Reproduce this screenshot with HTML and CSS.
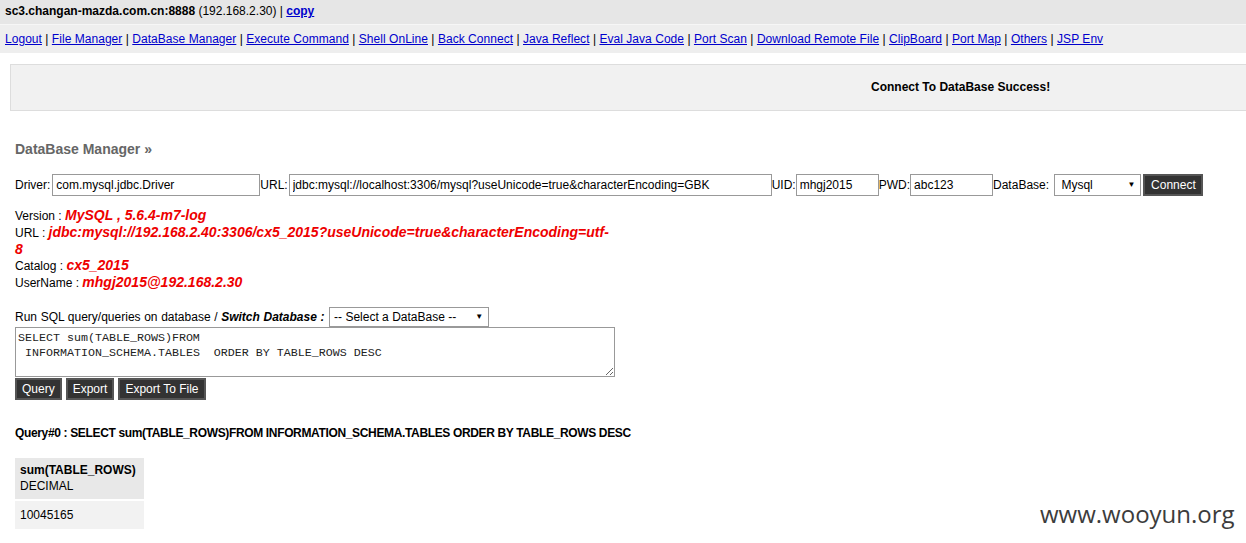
FILE: index.html
```html
<!DOCTYPE html>
<html lang="en">
<head>
  <meta charset="UTF-8">
  <title>JspSpy</title>
  <link rel="stylesheet" href="styles.css">
</head>
<body>
  <div class="head">
    <b>sc3.changan-mazda.com.cn:8888</b> (192.168.2.30) | <a href="#">copy</a>
  </div>
  <div class="nav">
    <a href="#">Logout</a> |
    <a href="#">File Manager</a> |
    <a href="#">DataBase Manager</a> |
    <a href="#">Execute Command</a> |
    <a href="#">Shell OnLine</a> |
    <a href="#">Back Connect</a> |
    <a href="#">Java Reflect</a> |
    <a href="#">Eval Java Code</a> |
    <a href="#">Port Scan</a> |
    <a href="#">Download Remote File</a> |
    <a href="#">ClipBoard</a> |
    <a href="#">Port Map</a> |
    <a href="#">Others</a> |
    <a href="#">JSP Env</a>
  </div>

  <div class="msg">Connect To DataBase Success!</div>

  <div class="main">
    <h2>DataBase Manager &raquo;</h2>

    <form class="conn">
      Driver:<input type="text" class="in-driver" value="com.mysql.jdbc.Driver">URL:<input type="text" class="in-url" value="jdbc:mysql://localhost:3306/mysql?useUnicode=true&amp;characterEncoding=GBK">UID:<input type="text" class="in-uid" value="mhgj2015">PWD:<input type="text" class="in-pwd" value="abc123">DataBase: <span class="sel in-db"><select><option>Mysql</option></select></span><button type="button" class="bt">Connect</button>
    </form>

    <div class="info">
      <div>Version : <span class="val">MySQL , 5.6.4-m7-log</span></div>
      <div>URL : <span class="val">jdbc:mysql://192.168.2.40:3306/cx5_2015?useUnicode=true&amp;characterEncoding=utf-8</span></div>
      <div>Catalog : <span class="val">cx5_2015</span></div>
      <div>UserName : <span class="val">mhgj2015@192.168.2.30</span></div>
    </div>

    <div class="run">
      Run SQL query/queries on database / <b><i>Switch Database :</i></b>
      <span class="sel in-switch"><select><option>-- Select a DataBase --</option></select></span>
    </div>
    <textarea class="sql">SELECT sum(TABLE_ROWS)FROM
 INFORMATION_SCHEMA.TABLES  ORDER BY TABLE_ROWS DESC</textarea>
    <div class="btns">
      <button type="button" class="bt">Query</button>
      <button type="button" class="bt">Export</button>
      <button type="button" class="bt">Export To File</button>
    </div>

    <p class="qtitle">Query#0 : SELECT sum(TABLE_ROWS)FROM INFORMATION_SCHEMA.TABLES ORDER BY TABLE_ROWS DESC</p>

    <table class="res">
      <tr class="hd">
        <td><b>sum(TABLE_ROWS)</b><br>DECIMAL</td>
      </tr>
      <tr>
        <td>10045165</td>
      </tr>
    </table>
  </div>

  <div class="mark">www.wooyun.org</div>
</body>
</html>
```

FILE: styles.css
```css
    body {
      margin: 0;
      font-family: "Liberation Sans", Arial, sans-serif;
      font-size: 12px;
      color: #000;
      background: #fff;
    }

    a {
      color: #0000cc;
    }

    .head {
      background: #e6e6e6;
      height: 24px;
      line-height: 22px;
      padding-left: 5px;
      border-bottom: 1px solid #f6f6f6;
    }

    .head a {
      font-weight: bold;
    }

    .nav {
      background: #eeeeee;
      height: 28px;
      line-height: 28px;
      padding-left: 5px;
      letter-spacing: 0.04px;
    }

    .msg {
      margin: 11px 0 0 10px;
      height: 45px;
      line-height: 45px;
      background: #f1f1f1;
      border: 1px solid #dddddd;
      border-right: none;
      padding-left: 860px;
      font-weight: bold;
    }

    .main {
      padding: 0 15px;
    }

    h2 {
      margin: 30px 0 17px;
      font-size: 14px;
      color: #666;
    }

    .conn {
      margin: 0;
      height: 22px;
      line-height: 22px;
      white-space: nowrap;
    }

    .conn input {
      font-family: "Liberation Sans", Arial, sans-serif;
      font-size: 12px;
      height: 22px;
      box-sizing: border-box;
      border: 1px solid #999;
      padding: 1px 3px;
      margin: 0;
      vertical-align: top;
    }

    .conn .in-driver { width: 208px; margin-left: 2px; }
    .conn .in-url { width: 483px; margin-left: 1px; }
    .conn .in-uid { width: 83px; }
    .conn .in-pwd { width: 83px; }

    .sel {
      position: relative;
      display: inline-block;
      vertical-align: top;
    }

    .sel select {
      appearance: none;
      -webkit-appearance: none;
      width: 100%;
      height: 100%;
      font-family: "Liberation Sans", Arial, sans-serif;
      font-size: 12px;
      box-sizing: border-box;
      border: 1px solid #999;
      background: #fff;
      color: #000;
      padding: 0 4px;
      margin: 0;
    }

    .sel::after {
      content: "\25BC";
      position: absolute;
      right: 6px;
      top: 50%;
      transform: translateY(-50%);
      font-size: 8px;
      line-height: 8px;
      pointer-events: none;
    }

    .in-db {
      width: 87px;
      height: 22px;
      margin-left: 2px;
      margin-right: 2px;
    }

    .in-db select {
      padding-left: 6px;
    }

    .bt {
      font-family: "Liberation Sans", Arial, sans-serif;
      font-size: 12px;
      background: #333;
      color: #fff;
      border: 2px solid #555;
      height: 22px;
      padding: 0 5px;
      vertical-align: top;
      cursor: pointer;
    }

    .conn .bt {
      width: 60px;
    }

    .info {
      margin-top: 12px;
      width: 598px;
      line-height: 16.75px;
    }

    .val {
      color: #ee0000;
      font-weight: bold;
      font-style: italic;
      font-size: 14px;
      line-height: 14px;
    }

    .run {
      margin-top: 15px;
      height: 20px;
      line-height: 20px;
      word-spacing: 0.3px;
    }

    .in-switch {
      width: 160px;
      height: 20px;
      margin-left: 1px;
      word-spacing: normal;
    }

    .sql {
      display: block;
      width: 600px;
      height: 50px;
      box-sizing: border-box;
      margin: 0;
      padding: 3px 2px;
      border: 1px solid #999;
      font-family: "Liberation Mono", "Courier New", monospace;
      font-size: 11.67px;
      line-height: 15px;
      color: #222;
      resize: vertical;
    }

    .btns {
      margin-top: 1px;
      display: flex;
      gap: 4px;
    }

    .btns .bt {
      height: 22px;
    }

    .qtitle {
      margin: 26px 0 0;
      font-weight: bold;
      letter-spacing: -0.35px;
    }

    .res {
      margin-top: 18px;
      border-collapse: collapse;
    }

    .res td {
      width: 119px;
      padding: 4px 5px;
      border-bottom: 2px solid #fff;
      background: #f2f2f2;
      line-height: 16px;
    }

    .res .hd td {
      background: #e8e8e8;
      height: 33px;
    }

    .res tr + tr td {
      height: 19px;
      padding-top: 5px;
    }

    .mark {
      position: absolute;
      left: 1040px;
      top: 497px;
      font-family: "Open Sans", "Noto Sans", sans-serif;
      font-size: 24px;
      color: #3c3c3c;
    }
```
